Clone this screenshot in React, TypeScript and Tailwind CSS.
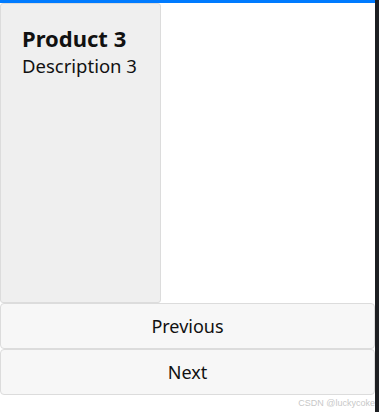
export default function App() {
  return (
    <div className="flex h-[412px] w-[379px] bg-white font-['Noto_Sans',sans-serif] text-[#111]">
      <div className="relative flex w-[375px] flex-col">
        <div className="h-[3px] w-full bg-[#007bff]" />
        <div className="h-[300px] w-[161px] rounded-[3px] border border-[#dcdcdc] bg-[#efefef] px-[21px] pt-[20px]">
          <h2 className="text-[22px] leading-[28px] font-bold">Product 3</h2>
          <p className="mt-[2px] text-[18.5px] leading-[24px]">Description 3</p>
        </div>
        <button
          type="button"
          className="h-[46px] w-full rounded-[4px] border border-[#dcdcdc] bg-[#f7f7f7] text-[18px]"
        >
          Previous
        </button>
        <button
          type="button"
          className="h-[46px] w-full rounded-[4px] border border-[#dcdcdc] bg-[#f7f7f7] text-[18px]"
        >
          Next
        </button>
        <span className="absolute top-[397px] right-0 font-['Liberation_Sans',sans-serif] text-[9px] leading-[12px] whitespace-nowrap text-[#c8c8c8]">
          CSDN @luckycoke
        </span>
      </div>
      <div className="w-[4px] bg-[#1d1f22]" />
    </div>
  )
}
